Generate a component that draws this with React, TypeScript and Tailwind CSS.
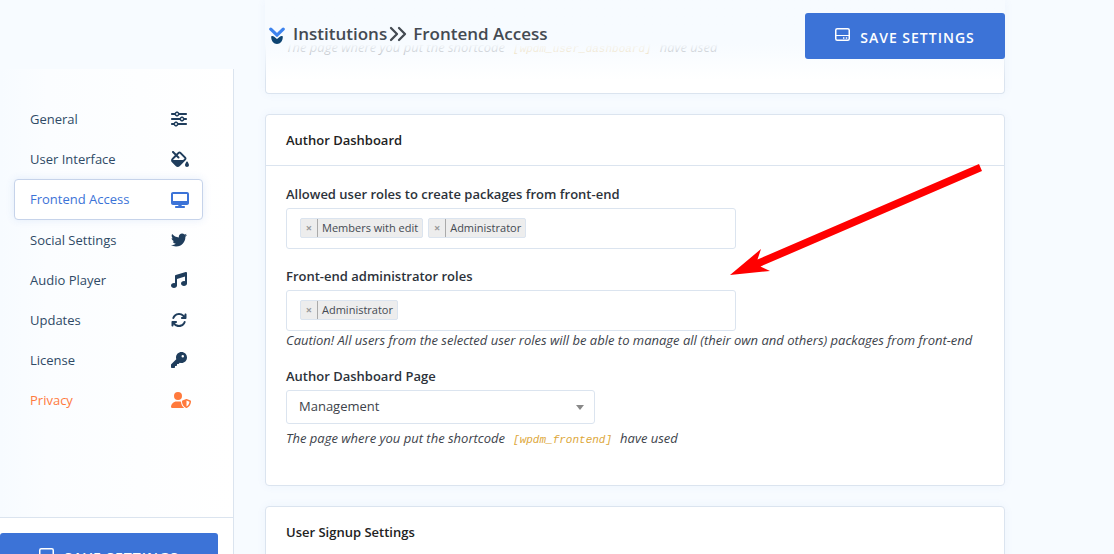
import type { ReactNode } from "react";
import type { IconType } from "react-icons";
import {
  FaArrowsRotate,
  FaDesktop,
  FaFillDrip,
  FaKey,
  FaMusic,
  FaSliders,
  FaTwitter,
  FaUserShield,
} from "react-icons/fa6";

type NavItem = { label: string; icon: IconType; iconWidth: string; tone?: "active" | "warn" };

const navItems: NavItem[] = [
  { label: "General", icon: FaSliders, iconWidth: "w-4" },
  { label: "User Interface", icon: FaFillDrip, iconWidth: "w-[18px]" },
  { label: "Frontend Access", icon: FaDesktop, iconWidth: "w-[18px]", tone: "active" },
  { label: "Social Settings", icon: FaTwitter, iconWidth: "w-4" },
  { label: "Audio Player", icon: FaMusic, iconWidth: "w-4" },
  { label: "Updates", icon: FaArrowsRotate, iconWidth: "w-4" },
  { label: "License", icon: FaKey, iconWidth: "w-4" },
  { label: "Privacy", icon: FaUserShield, iconWidth: "w-5", tone: "warn" },
];

function DriveIcon() {
  return (
    <svg viewBox="0 0 15 13" className="h-[13px] w-[15px]" fill="none" stroke="currentColor" aria-hidden="true">
      <rect x="0.75" y="0.75" width="13.5" height="11.5" rx="1.5" strokeWidth="1.5" />
      <path d="M1 7.5h13" strokeWidth="1" />
      <path d="M8 10h1.4M10.800 10h1.4" strokeWidth="1.4" />
    </svg>
  );
}

function SaveButton({ className }: { className: string }) {
  return (
    <button
      type="button"
      className={`flex h-[46px] items-center justify-center gap-2.5 rounded-[3px] bg-[#3c73d7] text-sm font-semibold tracking-[1px] text-white ${className}`}
    >
      <span className="pb-1">
        <DriveIcon />
      </span>
      <span className="pt-1">SAVE SETTINGS</span>
    </button>
  );
}

function NavLink({ label, icon: Icon, iconWidth, tone }: NavItem) {
  const look =
    tone === "active"
      ? "h-[41px] border-[#c6d3ea] bg-white text-[#3c73d7] shadow-[0_0_8px_rgba(60,115,215,0.12)]"
      : tone === "warn"
        ? "h-10 border-transparent text-[#ff7a3d]"
        : "h-10 border-transparent text-[#2f4a66]";
  const iconColor = tone ? "" : "text-[#1f3d5c]";
  return (
    <li>
      <a
        href="#"
        aria-current={tone === "active" ? "page" : undefined}
        className={`flex items-center justify-between rounded border pr-[11px] pl-[15px] text-[13px] ${look}`}
      >
        <span className="pt-px">{label}</span>
        <span className="flex w-5">
          <Icon className={`h-4 shrink-0 ${iconWidth} ${iconColor}`} />
        </span>
      </a>
    </li>
  );
}

function Sidebar() {
  return (
    <aside className="mt-[69px] flex w-[234px] shrink-0 flex-col border-r border-[#dbe4ef] bg-linear-to-r from-[#f7fbff] via-[#fbfdff] via-20% to-white">
      <nav className="flex-1 pt-[30px] pr-[30px] pl-3.5">
        <ul>
          {navItems.map((item) => (
            <NavLink key={item.label} {...item} />
          ))}
        </ul>
      </nav>
      <div className="h-[37px] overflow-hidden border-t border-[#dbe4ef] bg-white pt-[15px] pr-[15px]">
        <SaveButton className="w-full" />
      </div>
    </aside>
  );
}

function Card({ title, className = "", children }: { title?: string; className?: string; children?: ReactNode }) {
  return (
    <section
      className={`rounded border border-[#dbe4ef] bg-white shadow-[0_0_10px_rgba(60,115,215,0.06)] ${className}`}
    >
      {title && (
        <h2 className="flex h-[51px] items-center border-b border-[#dbe4ef] px-5 pt-0.5 text-[13px] font-semibold text-[#222222]">
          {title}
        </h2>
      )}
      {children}
    </section>
  );
}

function RoleField({ id, label, roles }: { id: string; label: string; roles: string[] }) {
  return (
    <div>
      <label htmlFor={id} className="block pb-1 text-[13px] leading-5 font-semibold text-[#2c323a]">
        {label}
      </label>
      <div className="flex h-[41px] w-[450px] items-center gap-[5px] rounded-[3px] border border-[#dbe4ef] bg-white px-[13px] pb-px">
        {roles.map((role) => (
          <span
            key={role}
            className="flex h-5 shrink-0 items-stretch rounded-[2px] border border-[#dbe4ef] bg-[#ededed] text-[11px] leading-[18px] text-[#444a52]"
          >
            <button
              type="button"
              aria-label={`Remove ${role}`}
              className="w-[17px] border-r border-[#aaaaaa] text-[11px] font-bold text-[#999999]"
            >
              ×
            </button>
            <span className="px-1">{role}</span>
          </span>
        ))}
        <input id={id} type="text" className="h-full min-w-0 flex-1 bg-transparent text-xs outline-none" />
      </div>
    </div>
  );
}

function ShortcodeHint({ code }: { code: string }) {
  return (
    <p className="text-[13px] leading-5 text-[#3d434b] italic">
      The page where you put the shortcode
      <code className="px-2 font-['Liberation_Mono',monospace] text-[11px] text-[#dda73a]">{code}</code>
      have used
    </p>
  );
}

function PageHeader() {
  return (
    <header className="absolute inset-x-0 top-0 z-10 flex h-20 items-start justify-between bg-linear-to-b from-[#f7fbff] from-55% to-transparent">
      <h1 className="flex h-[68px] items-center pl-1 text-[17px] font-semibold text-[#444a52]">
        <svg viewBox="0 0 16 20" className="mr-2 h-5 w-4" fill="none" aria-hidden="true">
          <path
            d="M2.200 12.400C3.300 11.500 4.400 12.100 5.200 12.800L8 15L10.800 12.800C11.600 12.100 12.700 11.500 13.800 12.400C14 16.900 11.200 19.900 8 19.900S2 16.900 2.200 12.400Z"
            fill="#0d4472"
          />
          <path
            d="M1.800 5.200L8 11.200L14.200 5.200"
            stroke="#3d83ee"
            strokeWidth="3.200"
            strokeLinecap="round"
            strokeLinejoin="round"
          />
        </svg>
        Institutions
        <svg viewBox="0 0 18 16" className="mr-1.5 ml-0.5 h-4 w-[18px]" fill="none" aria-hidden="true">
          <path
            d="M2 2l6 6-6 6M10 2l6 6-6 6"
            stroke="currentColor"
            strokeWidth="2.300"
            strokeLinecap="round"
            strokeLinejoin="round"
          />
        </svg>
        Frontend Access
      </h1>
      <SaveButton className="mt-[13px] w-[200px]" />
    </header>
  );
}

function PointerArrow() {
  return (
    <svg
      viewBox="0 0 252 112"
      className="pointer-events-none absolute top-[49px] right-[22px] h-[112px] w-[252px]"
      aria-hidden="true"
    >
      <path d="M249 0L252 7L30.500 102.500L40 107L0 111L31 85L27.500 95.500Z" fill="#ff0000" />
    </svg>
  );
}

export default function App() {
  return (
    <div className="flex h-screen overflow-hidden bg-[#f7fbff] font-['Open_Sans',sans-serif]">
      <Sidebar />
      <main className="relative ml-[31px] max-w-[740px] flex-1">
        <PageHeader />
        <div className="flex flex-col gap-5">
          <Card className="h-[94px] rounded-t-none border-t-0 px-5 pt-[37px]">
            <ShortcodeHint code="[wpdm_user_dashboard]" />
          </Card>
          <Card title="Author Dashboard" className="relative h-[372px]">
            <div className="px-5 pt-[18px]">
              <RoleField
                id="create-roles"
                label="Allowed user roles to create packages from front-end"
                roles={["Members with edit", "Administrator"]}
              />
              <div className="pt-[17px]">
                <RoleField id="admin-roles" label="Front-end administrator roles" roles={["Administrator"]} />
                <p className="text-[13px] leading-[18px] text-[#3d434b] italic">
                  Caution! All users from the selected user roles will be able to manage all (their own and others)
                  packages from front-end
                </p>
              </div>
              <div className="pt-[17px]">
                <label
                  htmlFor="dashboard-page"
                  className="block pb-1 text-[13px] leading-5 font-semibold text-[#2c323a]"
                >
                  Author Dashboard Page
                </label>
                <div className="relative w-[309px]">
                  <select
                    id="dashboard-page"
                    className="h-[34px] w-full appearance-none rounded-[3px] border border-[#dbe4ef] bg-white px-3 text-[13px] text-[#3d434b]"
                  >
                    <option>Management</option>
                  </select>
                  <svg
                    viewBox="0 0 8 5"
                    className="pointer-events-none absolute top-[15px] right-[11px] h-[5px] w-2"
                    aria-hidden="true"
                  >
                    <path d="M0 0h8L4 5z" fill="#888888" />
                  </svg>
                </div>
                <div className="pt-1">
                  <ShortcodeHint code="[wpdm_frontend]" />
                </div>
              </div>
            </div>
            <PointerArrow />
          </Card>
          <Card title="User Signup Settings" className="h-[200px] shrink-0" />
        </div>
      </main>
    </div>
  );
}
